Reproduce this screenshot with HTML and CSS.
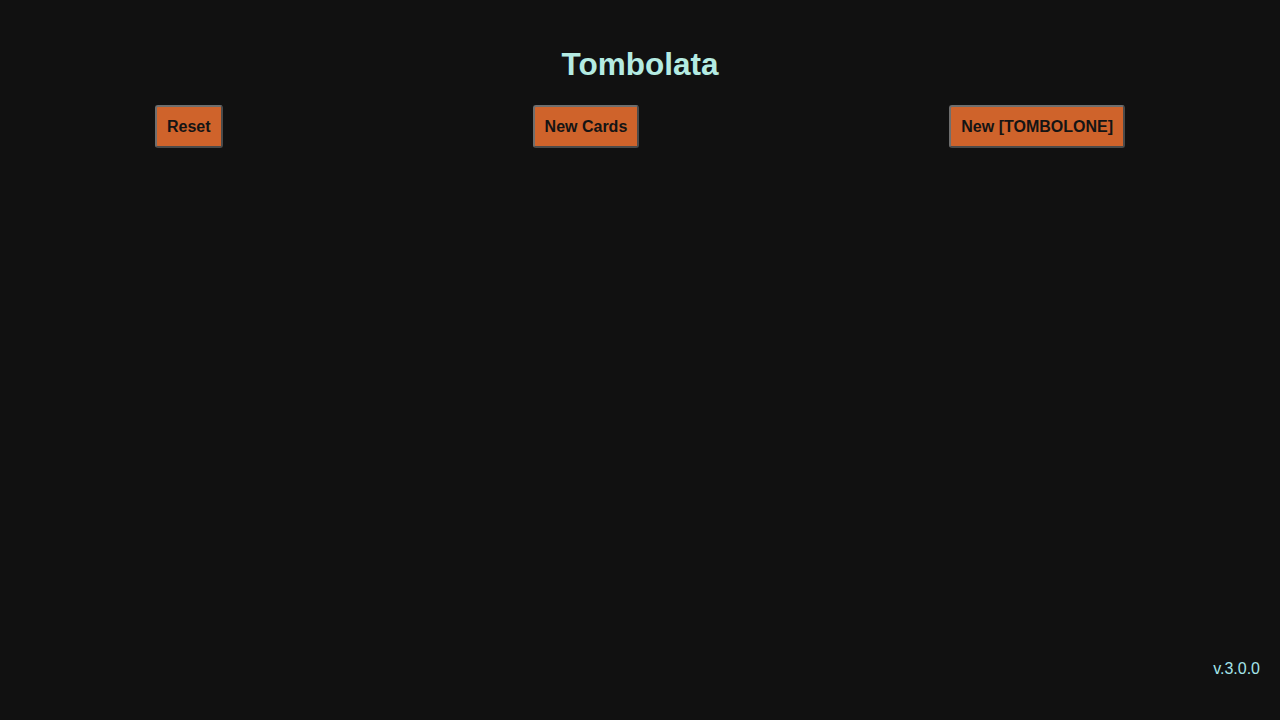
FILE: index.html
```html
<!DOCTYPE html>
<html lang="it">
<head>
<meta charset="utf-8">
<title>Tombolata</title>
<link rel="stylesheet" href="styles.css">
</head>
<body>
<header class="header">
  <h1 class="title">Tombolata</h1>
</header>
<nav class="controls">
  <button class="btn">Reset</button>
  <button class="btn">New Cards</button>
  <button class="btn">New [TOMBOLONE]</button>
</nav>
<footer class="version">v.3.0.0</footer>
</body>
</html>
```
FILE: styles.css
```css
html, body {
  margin: 0;
  padding: 0;
  height: 100%;
}
body {
  background: #111111;
  font-family: "Liberation Sans", Arial, sans-serif;
  color: #aee8e4;
  display: flex;
  flex-direction: column;
}
.header {
  display: flex;
  justify-content: center;
  padding-top: 46px;
}
.title {
  margin: 0;
  font-size: 31.5px;
  line-height: 36px;
  font-weight: bold;
  color: #b4ebe2;
}
.controls {
  display: flex;
  justify-content: space-around;
  margin-top: 23px;
}
.btn {
  font-family: "Liberation Sans", Arial, sans-serif;
  font-size: 16px;
  font-weight: bold;
  color: #141414;
  background: #cf632b;
  border: 2px solid #6e6e6e;
  border-right-color: #4a4a4a;
  border-bottom-color: #4a4a4a;
  border-radius: 3px;
  padding: 10px 10px;
  line-height: 19px;
}
.version {
  margin-top: auto;
  align-self: flex-end;
  padding: 0 20px 42px 0;
  font-size: 16px;
  color: #a4e4ea;
}
```
